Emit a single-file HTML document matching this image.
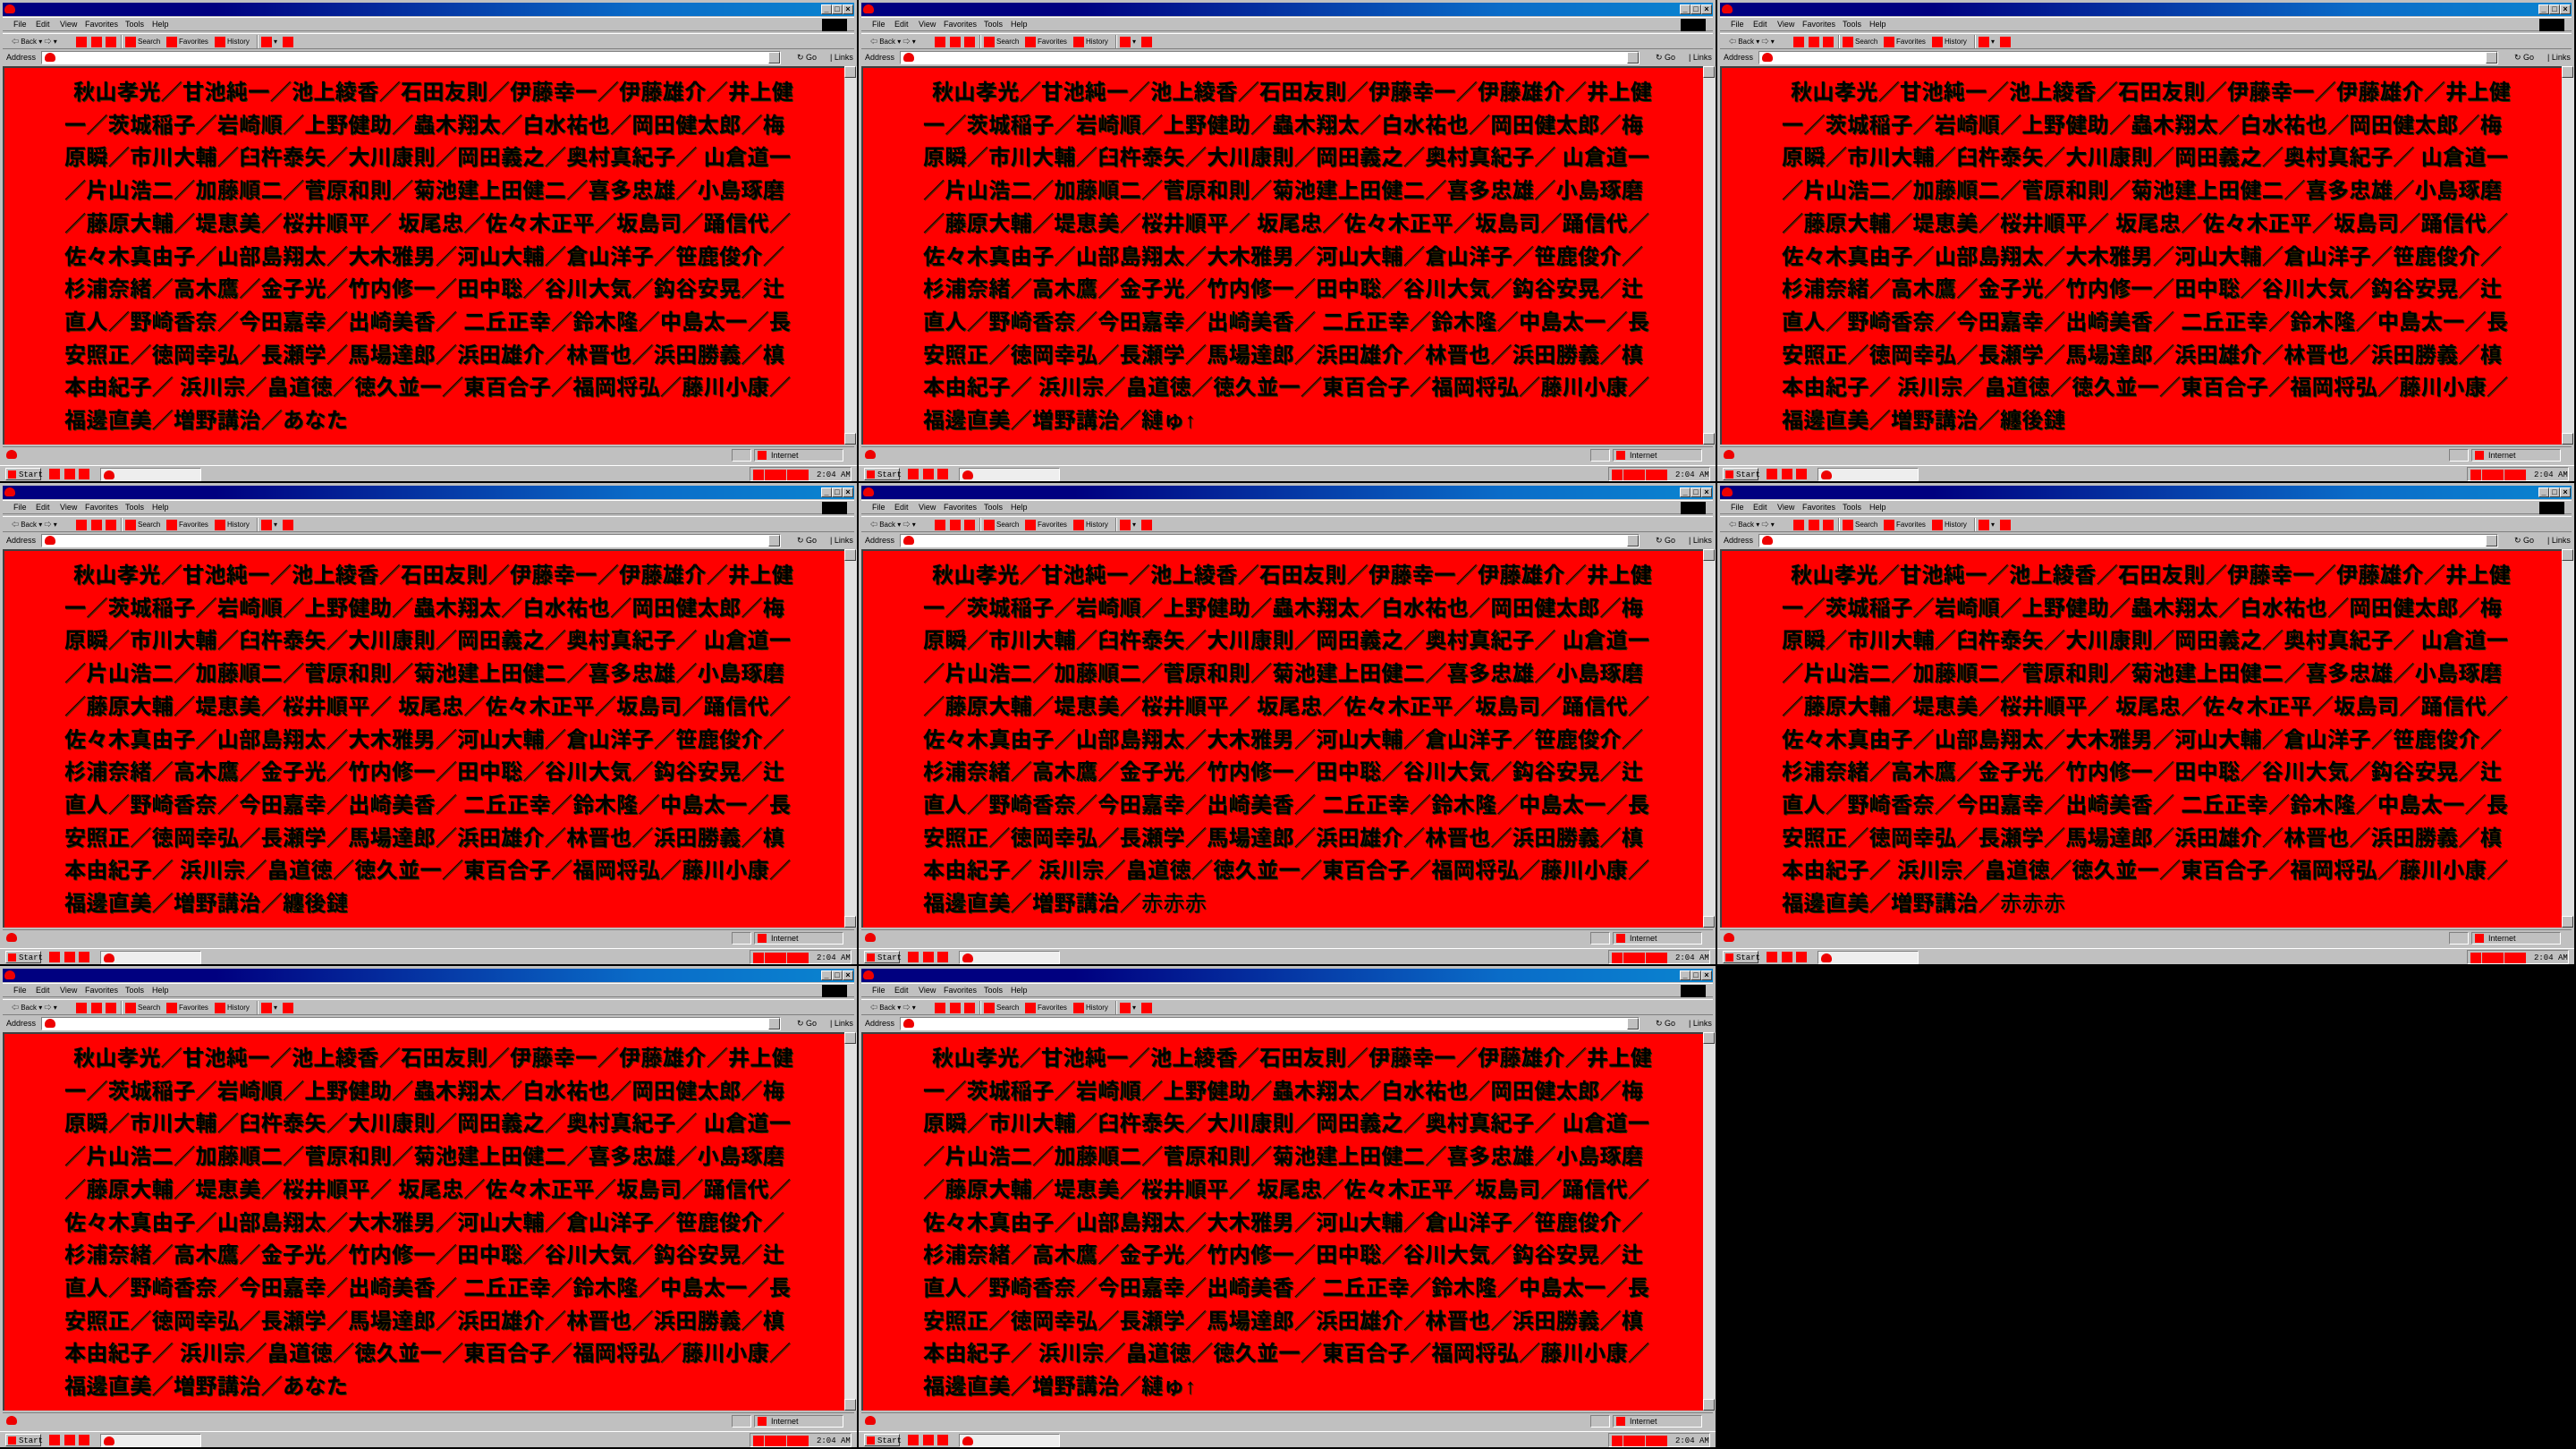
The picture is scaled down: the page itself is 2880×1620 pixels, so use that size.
<!DOCTYPE html>
<html><head><meta charset="utf-8">
<style>
*{margin:0;padding:0;box-sizing:border-box}
body{width:2880px;height:1620px;background:#000;position:relative;overflow:hidden;font-family:"Liberation Sans","Noto Sans CJK JP",sans-serif}
.p{position:absolute;width:958px;height:538px;background:#c0c0c0;overflow:hidden}
.p>div{position:absolute}
.tb{top:3px;left:3px;width:952px;height:15px;background:linear-gradient(90deg,#000080 0%,#000080 25%,#0a6cc8 75%,#0a84d0 100%)}
.ico{position:absolute;width:12px;height:10px;background:#e00;border-radius:6px 6px 3px 3px}
.tb .ico{left:2px;top:2px}
.btn{position:absolute;top:2px;width:12px;height:11px;background:#c0c0c0;border:1px solid;border-color:#fff #404040 #404040 #fff;font:bold 9px/9px "Liberation Sans",sans-serif;text-align:center;color:#000}
.mn{top:19px;left:3px;width:952px;height:16px;border-top:1px solid #fff;border-bottom:1px solid #808080;font-size:9px;line-height:15px;color:#000}
.mn span{position:absolute;top:0}
.blk{position:absolute;right:8px;top:1px;width:28px;height:14px;background:#000}
.tl{top:37px;left:3px;width:952px;height:18px;border-top:1px solid #fff;border-bottom:1px solid #808080;font-size:8px;line-height:17px}
.tl span{position:absolute;top:0}
.r{position:absolute;top:3px;width:12px;height:12px;background:#f00}
.sep{position:absolute;top:1px;width:2px;height:15px;border-left:1px solid #808080;border-right:1px solid #fff}
.ad{top:56px;left:3px;width:952px;height:17px;font-size:9px;line-height:16px}
.ad .lab{position:absolute;left:4px;top:0}
.ad .box{position:absolute;left:43px;top:1px;width:827px;height:15px;background:#fff;border:1px solid;border-color:#808080 #fff #fff #808080}
.ad .dd{position:absolute;left:856px;top:2px;width:13px;height:13px;background:#c0c0c0;border:1px solid;border-color:#fff #404040 #404040 #fff}
.ad .go{position:absolute;left:888px;top:0}
.ad .lk{position:absolute;left:925px;top:0}
.ct{top:74px;left:3px;width:941px;height:423px;background:#f00;border-top:2px solid #404040;border-left:2px solid #404040}
.sb{top:74px;left:944px;width:14px;height:423px;background:#e0e0e0}
.sb i{position:absolute;left:0;width:13px;height:13px;background:#c0c0c0;border:1px solid;border-color:#fff #404040 #404040 #fff}
.tx{top:86px;left:72px;font-family:"Liberation Sans","Noto Sans CJK JP",sans-serif;font-weight:bold;font-size:24px;line-height:36.7px;letter-spacing:0.4px;color:#000;white-space:nowrap;text-shadow:1px 1px 0 #303000}
.tx div:first-child{padding-left:10px}
.st{top:499px;left:3px;width:952px;height:18px;border-top:1px solid #808080;font-size:9px;line-height:16px}
.st .ico{left:4px;top:3px}
.st .c{position:absolute;top:2px;height:14px;border:1px solid;border-color:#808080 #fff #fff #808080}
.tk{top:520px;left:0;width:958px;height:18px;border-top:1px solid #fff;font-size:9px;line-height:14px}
.start{position:absolute;left:6px;top:2px;width:40px;height:14px;border:1px solid;border-color:#fff #404040 #404040 #fff;font-family:"Liberation Mono",monospace;font-size:9px;padding-left:14px}
.start:before{content:"";position:absolute;left:2px;top:2px;width:9px;height:9px;background:#f00}
.q{position:absolute;top:3px;width:12px;height:12px;background:#f00}
.tbt{position:absolute;left:112px;top:2px;width:113px;height:15px;background:#eee;border:1px solid;border-color:#808080 #fff #fff #808080}
.tbt .ico{left:3px;top:2px}
.tray{position:absolute;left:838px;top:1px;width:114px;height:16px;border:1px solid;border-color:#808080 #fff #fff #808080;font-family:"Liberation Mono",monospace;font-size:9px}
.tray .q{top:2px}
</style></head><body>

<!-- TEMPLATE repeated 8 times -->
<div class="p" style="left:0;top:0">
<div class="tb"><i class="ico"></i><span class="btn" style="left:915px">_</span><span class="btn" style="left:927px">□</span><span class="btn" style="left:939px">×</span></div>
<div class="mn"><span style="left:12px">File</span><span style="left:37px">Edit</span><span style="left:64px">View</span><span style="left:92px">Favorites</span><span style="left:137px">Tools</span><span style="left:167px">Help</span><i class="blk"></i></div>
<div class="tl"><span style="left:10px">⇦ Back ▾ ⇨ ▾</span><i class="r" style="left:82px"></i><i class="r" style="left:99px"></i><i class="r" style="left:115px"></i><i class="sep" style="left:132px"></i><i class="r" style="left:137px"></i><span style="left:151px">Search</span><i class="r" style="left:183px"></i><span style="left:197px">Favorites</span><i class="r" style="left:237px"></i><span style="left:251px">History</span><i class="sep" style="left:284px"></i><i class="r" style="left:289px"></i><span style="left:303px">▾</span><i class="r" style="left:313px"></i></div>
<div class="ad"><span class="lab">Address</span><div class="box"><i class="ico" style="left:3px;top:1px"></i></div><i class="dd"></i><span class="go">↻ Go</span><span class="lk">| Links</span></div>
<div class="ct"></div>
<div class="sb"><i style="top:0"></i><i style="bottom:0"></i></div>
<div class="tx"><div>秋山孝光／甘池純一／池上綾香／石田友則／伊藤幸一／伊藤雄介／井上健</div><div>一／茨城稲子／岩崎順／上野健助／蟲木翔太／白水祐也／岡田健太郎／梅</div><div>原瞬／市川大輔／臼杵泰矢／大川康則／岡田義之／奥村真紀子／ 山倉道一</div><div>／片山浩二／加藤順二／菅原和則／菊池建上田健二／喜多忠雄／小島琢磨</div><div>／藤原大輔／堤恵美／桜井順平／ 坂尾忠／佐々木正平／坂島司／踊信代／</div><div>佐々木真由子／山部島翔太／大木雅男／河山大輔／倉山洋子／笹鹿俊介／</div><div>杉浦奈緒／高木鷹／金子光／竹内修一／田中聡／谷川大気／鈎谷安晃／辻</div><div>直人／野崎香奈／今田嘉幸／出崎美香／ 二丘正幸／鈴木隆／中島太一／長</div><div>安照正／徳岡幸弘／長瀬学／馬場達郎／浜田雄介／林晋也／浜田勝義／槙</div><div>本由紀子／ 浜川宗／畠道徳／徳久並一／東百合子／福岡将弘／藤川小康／</div><div>福邊直美／増野講治／あなた</div></div>
<div class="st"><i class="ico"></i><span class="c" style="left:815px;width:22px"></span><span class="c" style="left:840px;width:100px"><i class="q" style="left:3px;top:1px;width:10px;height:10px"></i><span style="position:absolute;left:18px;top:-2px">Internet</span></span></div>
<div class="tk"><span class="start">Start</span><i class="q" style="left:55px"></i><i class="q" style="left:72px"></i><i class="q" style="left:88px"></i><span class="tbt"><i class="ico"></i></span><span class="tray"><i class="q" style="left:3px"></i><i class="q" style="left:16px"></i><i class="q" style="left:28px"></i><i class="q" style="left:41px"></i><i class="q" style="left:53px"></i><span style="position:absolute;left:74px;top:1px">2:04 AM</span></span></div>
</div>

<div class="p" style="left:960px;top:0">
<div class="tb"><i class="ico"></i><span class="btn" style="left:915px">_</span><span class="btn" style="left:927px">□</span><span class="btn" style="left:939px">×</span></div>
<div class="mn"><span style="left:12px">File</span><span style="left:37px">Edit</span><span style="left:64px">View</span><span style="left:92px">Favorites</span><span style="left:137px">Tools</span><span style="left:167px">Help</span><i class="blk"></i></div>
<div class="tl"><span style="left:10px">⇦ Back ▾ ⇨ ▾</span><i class="r" style="left:82px"></i><i class="r" style="left:99px"></i><i class="r" style="left:115px"></i><i class="sep" style="left:132px"></i><i class="r" style="left:137px"></i><span style="left:151px">Search</span><i class="r" style="left:183px"></i><span style="left:197px">Favorites</span><i class="r" style="left:237px"></i><span style="left:251px">History</span><i class="sep" style="left:284px"></i><i class="r" style="left:289px"></i><span style="left:303px">▾</span><i class="r" style="left:313px"></i></div>
<div class="ad"><span class="lab">Address</span><div class="box"><i class="ico" style="left:3px;top:1px"></i></div><i class="dd"></i><span class="go">↻ Go</span><span class="lk">| Links</span></div>
<div class="ct"></div>
<div class="sb"><i style="top:0"></i><i style="bottom:0"></i></div>
<div class="tx"><div>秋山孝光／甘池純一／池上綾香／石田友則／伊藤幸一／伊藤雄介／井上健</div><div>一／茨城稲子／岩崎順／上野健助／蟲木翔太／白水祐也／岡田健太郎／梅</div><div>原瞬／市川大輔／臼杵泰矢／大川康則／岡田義之／奥村真紀子／ 山倉道一</div><div>／片山浩二／加藤順二／菅原和則／菊池建上田健二／喜多忠雄／小島琢磨</div><div>／藤原大輔／堤恵美／桜井順平／ 坂尾忠／佐々木正平／坂島司／踊信代／</div><div>佐々木真由子／山部島翔太／大木雅男／河山大輔／倉山洋子／笹鹿俊介／</div><div>杉浦奈緒／高木鷹／金子光／竹内修一／田中聡／谷川大気／鈎谷安晃／辻</div><div>直人／野崎香奈／今田嘉幸／出崎美香／ 二丘正幸／鈴木隆／中島太一／長</div><div>安照正／徳岡幸弘／長瀬学／馬場達郎／浜田雄介／林晋也／浜田勝義／槙</div><div>本由紀子／ 浜川宗／畠道徳／徳久並一／東百合子／福岡将弘／藤川小康／</div><div>福邊直美／増野講治／縺ゅ↑</div></div>
<div class="st"><i class="ico"></i><span class="c" style="left:815px;width:22px"></span><span class="c" style="left:840px;width:100px"><i class="q" style="left:3px;top:1px;width:10px;height:10px"></i><span style="position:absolute;left:18px;top:-2px">Internet</span></span></div>
<div class="tk"><span class="start">Start</span><i class="q" style="left:55px"></i><i class="q" style="left:72px"></i><i class="q" style="left:88px"></i><span class="tbt"><i class="ico"></i></span><span class="tray"><i class="q" style="left:3px"></i><i class="q" style="left:16px"></i><i class="q" style="left:28px"></i><i class="q" style="left:41px"></i><i class="q" style="left:53px"></i><span style="position:absolute;left:74px;top:1px">2:04 AM</span></span></div>
</div>

<div class="p" style="left:1920px;top:0">
<div class="tb"><i class="ico"></i><span class="btn" style="left:915px">_</span><span class="btn" style="left:927px">□</span><span class="btn" style="left:939px">×</span></div>
<div class="mn"><span style="left:12px">File</span><span style="left:37px">Edit</span><span style="left:64px">View</span><span style="left:92px">Favorites</span><span style="left:137px">Tools</span><span style="left:167px">Help</span><i class="blk"></i></div>
<div class="tl"><span style="left:10px">⇦ Back ▾ ⇨ ▾</span><i class="r" style="left:82px"></i><i class="r" style="left:99px"></i><i class="r" style="left:115px"></i><i class="sep" style="left:132px"></i><i class="r" style="left:137px"></i><span style="left:151px">Search</span><i class="r" style="left:183px"></i><span style="left:197px">Favorites</span><i class="r" style="left:237px"></i><span style="left:251px">History</span><i class="sep" style="left:284px"></i><i class="r" style="left:289px"></i><span style="left:303px">▾</span><i class="r" style="left:313px"></i></div>
<div class="ad"><span class="lab">Address</span><div class="box"><i class="ico" style="left:3px;top:1px"></i></div><i class="dd"></i><span class="go">↻ Go</span><span class="lk">| Links</span></div>
<div class="ct"></div>
<div class="sb"><i style="top:0"></i><i style="bottom:0"></i></div>
<div class="tx"><div>秋山孝光／甘池純一／池上綾香／石田友則／伊藤幸一／伊藤雄介／井上健</div><div>一／茨城稲子／岩崎順／上野健助／蟲木翔太／白水祐也／岡田健太郎／梅</div><div>原瞬／市川大輔／臼杵泰矢／大川康則／岡田義之／奥村真紀子／ 山倉道一</div><div>／片山浩二／加藤順二／菅原和則／菊池建上田健二／喜多忠雄／小島琢磨</div><div>／藤原大輔／堤恵美／桜井順平／ 坂尾忠／佐々木正平／坂島司／踊信代／</div><div>佐々木真由子／山部島翔太／大木雅男／河山大輔／倉山洋子／笹鹿俊介／</div><div>杉浦奈緒／高木鷹／金子光／竹内修一／田中聡／谷川大気／鈎谷安晃／辻</div><div>直人／野崎香奈／今田嘉幸／出崎美香／ 二丘正幸／鈴木隆／中島太一／長</div><div>安照正／徳岡幸弘／長瀬学／馬場達郎／浜田雄介／林晋也／浜田勝義／槙</div><div>本由紀子／ 浜川宗／畠道徳／徳久並一／東百合子／福岡将弘／藤川小康／</div><div>福邊直美／増野講治／纏後鏈</div></div>
<div class="st"><i class="ico"></i><span class="c" style="left:815px;width:22px"></span><span class="c" style="left:840px;width:100px"><i class="q" style="left:3px;top:1px;width:10px;height:10px"></i><span style="position:absolute;left:18px;top:-2px">Internet</span></span></div>
<div class="tk"><span class="start">Start</span><i class="q" style="left:55px"></i><i class="q" style="left:72px"></i><i class="q" style="left:88px"></i><span class="tbt"><i class="ico"></i></span><span class="tray"><i class="q" style="left:3px"></i><i class="q" style="left:16px"></i><i class="q" style="left:28px"></i><i class="q" style="left:41px"></i><i class="q" style="left:53px"></i><span style="position:absolute;left:74px;top:1px">2:04 AM</span></span></div>
</div>

<div class="p" style="left:0;top:540px">
<div class="tb"><i class="ico"></i><span class="btn" style="left:915px">_</span><span class="btn" style="left:927px">□</span><span class="btn" style="left:939px">×</span></div>
<div class="mn"><span style="left:12px">File</span><span style="left:37px">Edit</span><span style="left:64px">View</span><span style="left:92px">Favorites</span><span style="left:137px">Tools</span><span style="left:167px">Help</span><i class="blk"></i></div>
<div class="tl"><span style="left:10px">⇦ Back ▾ ⇨ ▾</span><i class="r" style="left:82px"></i><i class="r" style="left:99px"></i><i class="r" style="left:115px"></i><i class="sep" style="left:132px"></i><i class="r" style="left:137px"></i><span style="left:151px">Search</span><i class="r" style="left:183px"></i><span style="left:197px">Favorites</span><i class="r" style="left:237px"></i><span style="left:251px">History</span><i class="sep" style="left:284px"></i><i class="r" style="left:289px"></i><span style="left:303px">▾</span><i class="r" style="left:313px"></i></div>
<div class="ad"><span class="lab">Address</span><div class="box"><i class="ico" style="left:3px;top:1px"></i></div><i class="dd"></i><span class="go">↻ Go</span><span class="lk">| Links</span></div>
<div class="ct"></div>
<div class="sb"><i style="top:0"></i><i style="bottom:0"></i></div>
<div class="tx"><div>秋山孝光／甘池純一／池上綾香／石田友則／伊藤幸一／伊藤雄介／井上健</div><div>一／茨城稲子／岩崎順／上野健助／蟲木翔太／白水祐也／岡田健太郎／梅</div><div>原瞬／市川大輔／臼杵泰矢／大川康則／岡田義之／奥村真紀子／ 山倉道一</div><div>／片山浩二／加藤順二／菅原和則／菊池建上田健二／喜多忠雄／小島琢磨</div><div>／藤原大輔／堤恵美／桜井順平／ 坂尾忠／佐々木正平／坂島司／踊信代／</div><div>佐々木真由子／山部島翔太／大木雅男／河山大輔／倉山洋子／笹鹿俊介／</div><div>杉浦奈緒／高木鷹／金子光／竹内修一／田中聡／谷川大気／鈎谷安晃／辻</div><div>直人／野崎香奈／今田嘉幸／出崎美香／ 二丘正幸／鈴木隆／中島太一／長</div><div>安照正／徳岡幸弘／長瀬学／馬場達郎／浜田雄介／林晋也／浜田勝義／槙</div><div>本由紀子／ 浜川宗／畠道徳／徳久並一／東百合子／福岡将弘／藤川小康／</div><div>福邊直美／増野講治／纏後鏈</div></div>
<div class="st"><i class="ico"></i><span class="c" style="left:815px;width:22px"></span><span class="c" style="left:840px;width:100px"><i class="q" style="left:3px;top:1px;width:10px;height:10px"></i><span style="position:absolute;left:18px;top:-2px">Internet</span></span></div>
<div class="tk"><span class="start">Start</span><i class="q" style="left:55px"></i><i class="q" style="left:72px"></i><i class="q" style="left:88px"></i><span class="tbt"><i class="ico"></i></span><span class="tray"><i class="q" style="left:3px"></i><i class="q" style="left:16px"></i><i class="q" style="left:28px"></i><i class="q" style="left:41px"></i><i class="q" style="left:53px"></i><span style="position:absolute;left:74px;top:1px">2:04 AM</span></span></div>
</div>

<div class="p" style="left:960px;top:540px">
<div class="tb"><i class="ico"></i><span class="btn" style="left:915px">_</span><span class="btn" style="left:927px">□</span><span class="btn" style="left:939px">×</span></div>
<div class="mn"><span style="left:12px">File</span><span style="left:37px">Edit</span><span style="left:64px">View</span><span style="left:92px">Favorites</span><span style="left:137px">Tools</span><span style="left:167px">Help</span><i class="blk"></i></div>
<div class="tl"><span style="left:10px">⇦ Back ▾ ⇨ ▾</span><i class="r" style="left:82px"></i><i class="r" style="left:99px"></i><i class="r" style="left:115px"></i><i class="sep" style="left:132px"></i><i class="r" style="left:137px"></i><span style="left:151px">Search</span><i class="r" style="left:183px"></i><span style="left:197px">Favorites</span><i class="r" style="left:237px"></i><span style="left:251px">History</span><i class="sep" style="left:284px"></i><i class="r" style="left:289px"></i><span style="left:303px">▾</span><i class="r" style="left:313px"></i></div>
<div class="ad"><span class="lab">Address</span><div class="box"><i class="ico" style="left:3px;top:1px"></i></div><i class="dd"></i><span class="go">↻ Go</span><span class="lk">| Links</span></div>
<div class="ct"></div>
<div class="sb"><i style="top:0"></i><i style="bottom:0"></i></div>
<div class="tx"><div>秋山孝光／甘池純一／池上綾香／石田友則／伊藤幸一／伊藤雄介／井上健</div><div>一／茨城稲子／岩崎順／上野健助／蟲木翔太／白水祐也／岡田健太郎／梅</div><div>原瞬／市川大輔／臼杵泰矢／大川康則／岡田義之／奥村真紀子／ 山倉道一</div><div>／片山浩二／加藤順二／菅原和則／菊池建上田健二／喜多忠雄／小島琢磨</div><div>／藤原大輔／堤恵美／桜井順平／ 坂尾忠／佐々木正平／坂島司／踊信代／</div><div>佐々木真由子／山部島翔太／大木雅男／河山大輔／倉山洋子／笹鹿俊介／</div><div>杉浦奈緒／高木鷹／金子光／竹内修一／田中聡／谷川大気／鈎谷安晃／辻</div><div>直人／野崎香奈／今田嘉幸／出崎美香／ 二丘正幸／鈴木隆／中島太一／長</div><div>安照正／徳岡幸弘／長瀬学／馬場達郎／浜田雄介／林晋也／浜田勝義／槙</div><div>本由紀子／ 浜川宗／畠道徳／徳久並一／東百合子／福岡将弘／藤川小康／</div><div>福邊直美／増野講治／<span style="font-weight:normal">赤赤赤</span></div></div>
<div class="st"><i class="ico"></i><span class="c" style="left:815px;width:22px"></span><span class="c" style="left:840px;width:100px"><i class="q" style="left:3px;top:1px;width:10px;height:10px"></i><span style="position:absolute;left:18px;top:-2px">Internet</span></span></div>
<div class="tk"><span class="start">Start</span><i class="q" style="left:55px"></i><i class="q" style="left:72px"></i><i class="q" style="left:88px"></i><span class="tbt"><i class="ico"></i></span><span class="tray"><i class="q" style="left:3px"></i><i class="q" style="left:16px"></i><i class="q" style="left:28px"></i><i class="q" style="left:41px"></i><i class="q" style="left:53px"></i><span style="position:absolute;left:74px;top:1px">2:04 AM</span></span></div>
</div>

<div class="p" style="left:1920px;top:540px">
<div class="tb"><i class="ico"></i><span class="btn" style="left:915px">_</span><span class="btn" style="left:927px">□</span><span class="btn" style="left:939px">×</span></div>
<div class="mn"><span style="left:12px">File</span><span style="left:37px">Edit</span><span style="left:64px">View</span><span style="left:92px">Favorites</span><span style="left:137px">Tools</span><span style="left:167px">Help</span><i class="blk"></i></div>
<div class="tl"><span style="left:10px">⇦ Back ▾ ⇨ ▾</span><i class="r" style="left:82px"></i><i class="r" style="left:99px"></i><i class="r" style="left:115px"></i><i class="sep" style="left:132px"></i><i class="r" style="left:137px"></i><span style="left:151px">Search</span><i class="r" style="left:183px"></i><span style="left:197px">Favorites</span><i class="r" style="left:237px"></i><span style="left:251px">History</span><i class="sep" style="left:284px"></i><i class="r" style="left:289px"></i><span style="left:303px">▾</span><i class="r" style="left:313px"></i></div>
<div class="ad"><span class="lab">Address</span><div class="box"><i class="ico" style="left:3px;top:1px"></i></div><i class="dd"></i><span class="go">↻ Go</span><span class="lk">| Links</span></div>
<div class="ct"></div>
<div class="sb"><i style="top:0"></i><i style="bottom:0"></i></div>
<div class="tx"><div>秋山孝光／甘池純一／池上綾香／石田友則／伊藤幸一／伊藤雄介／井上健</div><div>一／茨城稲子／岩崎順／上野健助／蟲木翔太／白水祐也／岡田健太郎／梅</div><div>原瞬／市川大輔／臼杵泰矢／大川康則／岡田義之／奥村真紀子／ 山倉道一</div><div>／片山浩二／加藤順二／菅原和則／菊池建上田健二／喜多忠雄／小島琢磨</div><div>／藤原大輔／堤恵美／桜井順平／ 坂尾忠／佐々木正平／坂島司／踊信代／</div><div>佐々木真由子／山部島翔太／大木雅男／河山大輔／倉山洋子／笹鹿俊介／</div><div>杉浦奈緒／高木鷹／金子光／竹内修一／田中聡／谷川大気／鈎谷安晃／辻</div><div>直人／野崎香奈／今田嘉幸／出崎美香／ 二丘正幸／鈴木隆／中島太一／長</div><div>安照正／徳岡幸弘／長瀬学／馬場達郎／浜田雄介／林晋也／浜田勝義／槙</div><div>本由紀子／ 浜川宗／畠道徳／徳久並一／東百合子／福岡将弘／藤川小康／</div><div>福邊直美／増野講治／<span style="font-weight:normal">赤赤赤</span></div></div>
<div class="st"><i class="ico"></i><span class="c" style="left:815px;width:22px"></span><span class="c" style="left:840px;width:100px"><i class="q" style="left:3px;top:1px;width:10px;height:10px"></i><span style="position:absolute;left:18px;top:-2px">Internet</span></span></div>
<div class="tk"><span class="start">Start</span><i class="q" style="left:55px"></i><i class="q" style="left:72px"></i><i class="q" style="left:88px"></i><span class="tbt"><i class="ico"></i></span><span class="tray"><i class="q" style="left:3px"></i><i class="q" style="left:16px"></i><i class="q" style="left:28px"></i><i class="q" style="left:41px"></i><i class="q" style="left:53px"></i><span style="position:absolute;left:74px;top:1px">2:04 AM</span></span></div>
</div>

<div class="p" style="left:0;top:1080px">
<div class="tb"><i class="ico"></i><span class="btn" style="left:915px">_</span><span class="btn" style="left:927px">□</span><span class="btn" style="left:939px">×</span></div>
<div class="mn"><span style="left:12px">File</span><span style="left:37px">Edit</span><span style="left:64px">View</span><span style="left:92px">Favorites</span><span style="left:137px">Tools</span><span style="left:167px">Help</span><i class="blk"></i></div>
<div class="tl"><span style="left:10px">⇦ Back ▾ ⇨ ▾</span><i class="r" style="left:82px"></i><i class="r" style="left:99px"></i><i class="r" style="left:115px"></i><i class="sep" style="left:132px"></i><i class="r" style="left:137px"></i><span style="left:151px">Search</span><i class="r" style="left:183px"></i><span style="left:197px">Favorites</span><i class="r" style="left:237px"></i><span style="left:251px">History</span><i class="sep" style="left:284px"></i><i class="r" style="left:289px"></i><span style="left:303px">▾</span><i class="r" style="left:313px"></i></div>
<div class="ad"><span class="lab">Address</span><div class="box"><i class="ico" style="left:3px;top:1px"></i></div><i class="dd"></i><span class="go">↻ Go</span><span class="lk">| Links</span></div>
<div class="ct"></div>
<div class="sb"><i style="top:0"></i><i style="bottom:0"></i></div>
<div class="tx"><div>秋山孝光／甘池純一／池上綾香／石田友則／伊藤幸一／伊藤雄介／井上健</div><div>一／茨城稲子／岩崎順／上野健助／蟲木翔太／白水祐也／岡田健太郎／梅</div><div>原瞬／市川大輔／臼杵泰矢／大川康則／岡田義之／奥村真紀子／ 山倉道一</div><div>／片山浩二／加藤順二／菅原和則／菊池建上田健二／喜多忠雄／小島琢磨</div><div>／藤原大輔／堤恵美／桜井順平／ 坂尾忠／佐々木正平／坂島司／踊信代／</div><div>佐々木真由子／山部島翔太／大木雅男／河山大輔／倉山洋子／笹鹿俊介／</div><div>杉浦奈緒／高木鷹／金子光／竹内修一／田中聡／谷川大気／鈎谷安晃／辻</div><div>直人／野崎香奈／今田嘉幸／出崎美香／ 二丘正幸／鈴木隆／中島太一／長</div><div>安照正／徳岡幸弘／長瀬学／馬場達郎／浜田雄介／林晋也／浜田勝義／槙</div><div>本由紀子／ 浜川宗／畠道徳／徳久並一／東百合子／福岡将弘／藤川小康／</div><div>福邊直美／増野講治／あなた</div></div>
<div class="st"><i class="ico"></i><span class="c" style="left:815px;width:22px"></span><span class="c" style="left:840px;width:100px"><i class="q" style="left:3px;top:1px;width:10px;height:10px"></i><span style="position:absolute;left:18px;top:-2px">Internet</span></span></div>
<div class="tk"><span class="start">Start</span><i class="q" style="left:55px"></i><i class="q" style="left:72px"></i><i class="q" style="left:88px"></i><span class="tbt"><i class="ico"></i></span><span class="tray"><i class="q" style="left:3px"></i><i class="q" style="left:16px"></i><i class="q" style="left:28px"></i><i class="q" style="left:41px"></i><i class="q" style="left:53px"></i><span style="position:absolute;left:74px;top:1px">2:04 AM</span></span></div>
</div>

<div class="p" style="left:960px;top:1080px">
<div class="tb"><i class="ico"></i><span class="btn" style="left:915px">_</span><span class="btn" style="left:927px">□</span><span class="btn" style="left:939px">×</span></div>
<div class="mn"><span style="left:12px">File</span><span style="left:37px">Edit</span><span style="left:64px">View</span><span style="left:92px">Favorites</span><span style="left:137px">Tools</span><span style="left:167px">Help</span><i class="blk"></i></div>
<div class="tl"><span style="left:10px">⇦ Back ▾ ⇨ ▾</span><i class="r" style="left:82px"></i><i class="r" style="left:99px"></i><i class="r" style="left:115px"></i><i class="sep" style="left:132px"></i><i class="r" style="left:137px"></i><span style="left:151px">Search</span><i class="r" style="left:183px"></i><span style="left:197px">Favorites</span><i class="r" style="left:237px"></i><span style="left:251px">History</span><i class="sep" style="left:284px"></i><i class="r" style="left:289px"></i><span style="left:303px">▾</span><i class="r" style="left:313px"></i></div>
<div class="ad"><span class="lab">Address</span><div class="box"><i class="ico" style="left:3px;top:1px"></i></div><i class="dd"></i><span class="go">↻ Go</span><span class="lk">| Links</span></div>
<div class="ct"></div>
<div class="sb"><i style="top:0"></i><i style="bottom:0"></i></div>
<div class="tx"><div>秋山孝光／甘池純一／池上綾香／石田友則／伊藤幸一／伊藤雄介／井上健</div><div>一／茨城稲子／岩崎順／上野健助／蟲木翔太／白水祐也／岡田健太郎／梅</div><div>原瞬／市川大輔／臼杵泰矢／大川康則／岡田義之／奥村真紀子／ 山倉道一</div><div>／片山浩二／加藤順二／菅原和則／菊池建上田健二／喜多忠雄／小島琢磨</div><div>／藤原大輔／堤恵美／桜井順平／ 坂尾忠／佐々木正平／坂島司／踊信代／</div><div>佐々木真由子／山部島翔太／大木雅男／河山大輔／倉山洋子／笹鹿俊介／</div><div>杉浦奈緒／高木鷹／金子光／竹内修一／田中聡／谷川大気／鈎谷安晃／辻</div><div>直人／野崎香奈／今田嘉幸／出崎美香／ 二丘正幸／鈴木隆／中島太一／長</div><div>安照正／徳岡幸弘／長瀬学／馬場達郎／浜田雄介／林晋也／浜田勝義／槙</div><div>本由紀子／ 浜川宗／畠道徳／徳久並一／東百合子／福岡将弘／藤川小康／</div><div>福邊直美／増野講治／縺ゅ↑</div></div>
<div class="st"><i class="ico"></i><span class="c" style="left:815px;width:22px"></span><span class="c" style="left:840px;width:100px"><i class="q" style="left:3px;top:1px;width:10px;height:10px"></i><span style="position:absolute;left:18px;top:-2px">Internet</span></span></div>
<div class="tk"><span class="start">Start</span><i class="q" style="left:55px"></i><i class="q" style="left:72px"></i><i class="q" style="left:88px"></i><span class="tbt"><i class="ico"></i></span><span class="tray"><i class="q" style="left:3px"></i><i class="q" style="left:16px"></i><i class="q" style="left:28px"></i><i class="q" style="left:41px"></i><i class="q" style="left:53px"></i><span style="position:absolute;left:74px;top:1px">2:04 AM</span></span></div>
</div>

</body></html>
